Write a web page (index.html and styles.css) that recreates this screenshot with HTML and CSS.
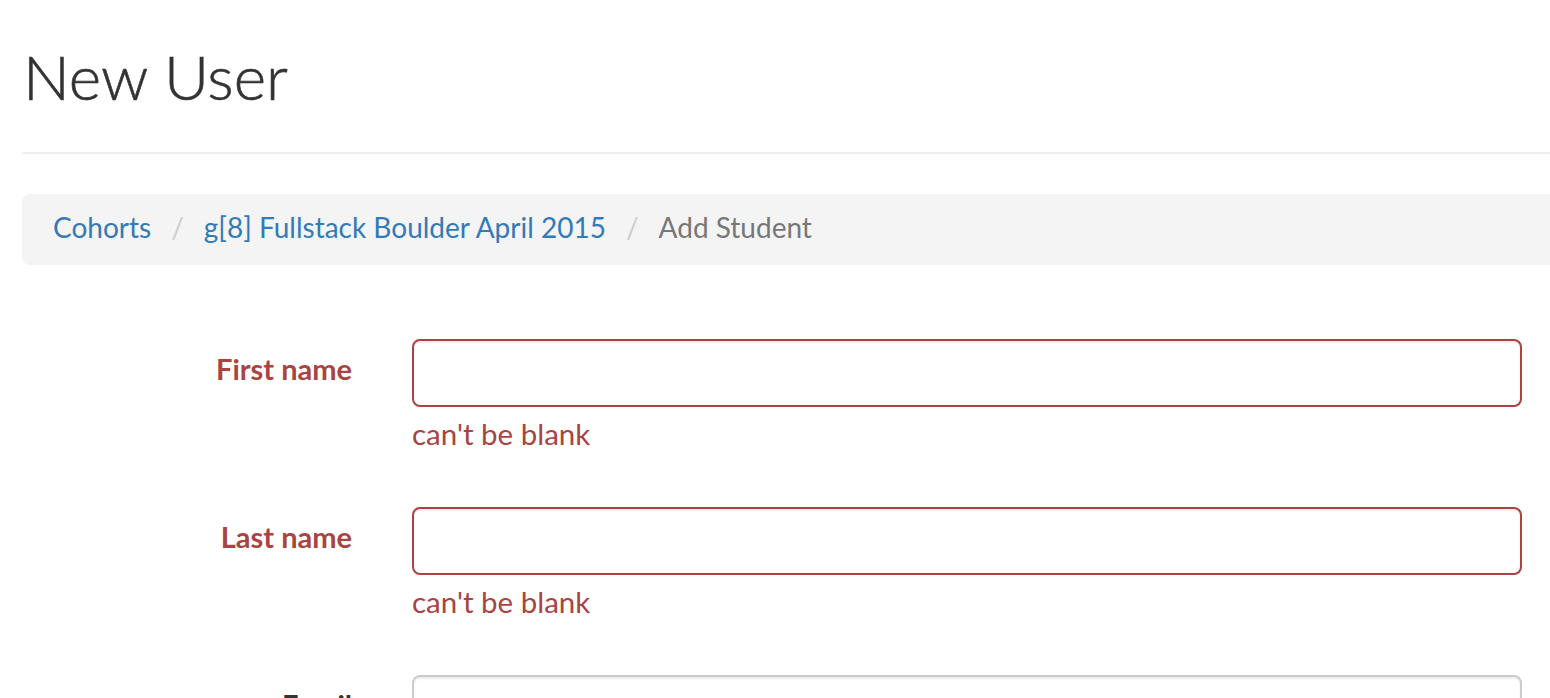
FILE: index.html
```html
<!DOCTYPE html>
<html>
<head>
<meta charset="utf-8">
<link rel="stylesheet" href="styles.css">
<title>New User</title>
</head>
<body>
<div class="page">
  <div class="page-header">
    <h1 class="title">New User</h1>
  </div>
  <ol class="breadcrumb">
    <li><a href="#">Cohorts</a></li>
    <li><a href="#">g[8] Fullstack Boulder April 2015</a></li>
    <li class="active">Add Student</li>
  </ol>
  <form class="form">
    <div class="form-group has-error">
      <label class="control-label">First name</label>
      <div class="field">
        <input class="form-control" type="text">
        <span class="help-block">can't be blank</span>
      </div>
    </div>
    <div class="form-group has-error">
      <label class="control-label">Last name</label>
      <div class="field">
        <input class="form-control" type="text">
        <span class="help-block">can't be blank</span>
      </div>
    </div>
    <div class="form-group">
      <label class="control-label">Email</label>
      <div class="field">
        <input class="form-control" type="text">
      </div>
    </div>
  </form>
</div>
</body>
</html>
```

FILE: styles.css
```css
html, body {
  margin: 0;
  padding: 0;
  background: #fff;
}
body {
  font-family: "Lato", "Noto Sans", sans-serif;
  color: #333;
  overflow: hidden;
}
.page {
  padding-left: 22px;
  width: 1560px;
}
.page-header {
  margin-top: 36px;
  padding-bottom: 36px;
  border-bottom: 2px solid #eee;
  margin-bottom: 40px;
}
.title {
  margin: 0;
  font-weight: 300;
  font-size: 62px;
  line-height: 80px;
  color: #333;
  padding-left: 1px;
  -webkit-text-stroke: 0.6px #333;
}
.breadcrumb {
  list-style: none;
  margin: 0 0 74px 0;
  padding: 13px 30px 18px 31px;
  background: #f4f4f4;
  border-radius: 8px;
  display: flex;
  font-size: 28px;
  line-height: 40px;
}
.breadcrumb a {
  color: #337ab7;
  text-decoration: none;
}
.breadcrumb li + li::before {
  content: "/";
  color: #ccc;
  padding: 0 20px 0 20px;
}
.breadcrumb .active {
  color: #777;
}
.form-group {
  display: flex;
  margin-bottom: 30px;
}
.control-label {
  width: 330px;
  text-align: right;
  padding-top: 10px;
  line-height: 40px;
  font-size: 29px;
  font-weight: 700;
  color: #333;
  margin-right: 60px;
}
.field {
  display: flex;
  flex-direction: column;
  width: 1110px;
}
.form-control {
  box-sizing: border-box;
  height: 68px;
  width: 1110px;
  border: 2px solid #ccc;
  border-radius: 8px;
  box-shadow: inset 0 2px 2px rgba(0,0,0,0.075);
  margin: 0;
  padding: 12px 24px;
  font-size: 28px;
}
.help-block {
  margin-top: 7px;
  margin-bottom: 23px;
  font-size: 29.5px;
  line-height: 40px;
}
.has-error .control-label,
.has-error .help-block {
  color: #a94442;
}
.has-error .form-control {
  border-color: #a94442;
}
```
